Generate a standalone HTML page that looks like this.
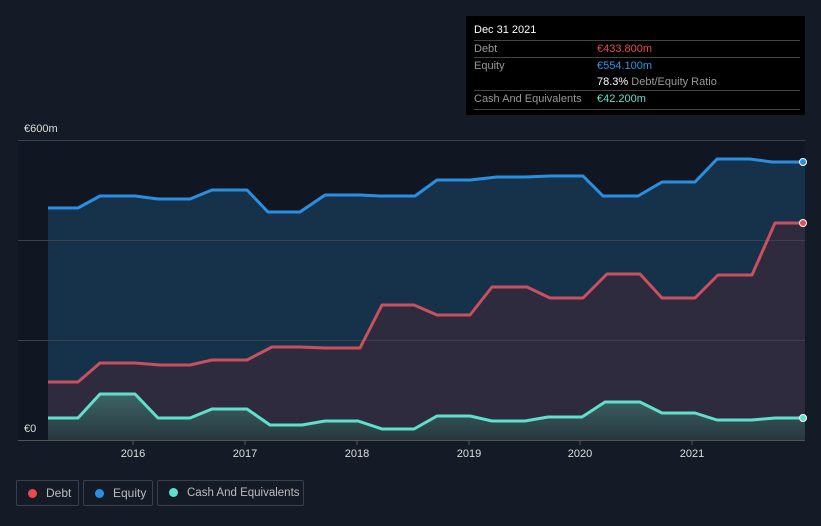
<!DOCTYPE html><html><head><style>
body{margin:0;width:821px;height:526px;background:#151b26;font-family:"Liberation Sans",sans-serif;overflow:hidden;position:relative}
.t{position:absolute;left:466px;top:16px;width:339px;height:99px;background:#000}
.r{position:absolute;left:8px;width:326px;border-top:1px solid #444;font-size:11px;color:#999}
.leg{position:absolute;top:480px;height:26px;border:1px solid #3a404c;border-radius:2px;font-size:12px;color:#bbb;line-height:24px;box-sizing:border-box;white-space:nowrap}
.leg i{display:inline-block;width:9px;height:9px;border-radius:50%;margin:0 9px 0 11px;vertical-align:-1px}
</style></head><body>
<svg width="821" height="526" style="position:absolute;left:0;top:0">
<defs><linearGradient id="cg" x1="0" y1="0" x2="0" y2="1"><stop offset="0" stop-color="#3f6466"/><stop offset="1" stop-color="#26383e"/></linearGradient></defs>
<rect x="18" y="140" width="787" height="300" fill="#111722"/>
<polygon fill="#16324a" points="48,208 78,208 100,196 135,196 158,199 190,199 212,190 247,190 268,212 300,212 325,195 360,195 380,196 415,196 437,180 470,180 497,177 525,177 550,176 583,176 603,196 638,196 662,182 695,182 717,159 750,159 772,162 805,162 805,440 48,440"/>
<polygon fill="#2f2b3e" points="48,382 78,382 100,363 135,363 160,365 190,365 212,360 247,360 272,347 300,347 325,348 360,348 382,305 414,305 437,315 470,315 492,287 527,287 550,298 583,298 607,274 640,274 662,298 695,298 718,275 752,275 775,223 805,223 805,440 48,440"/>
<polygon fill="url(#cg)" points="48,418 78,418 100,394 135,394 158,418 190,418 212,409 247,409 270,425 302,425 325,421 358,421 382,429 414,429 437,416 470,416 492,421 525,421 548,417 582,417 605,402 640,402 662,413 695,413 717,420 752,420 775,418 805,418 805,440 48,440"/>
<g stroke="#3a404c" stroke-width="1"><line x1="18" y1="140.5" x2="805" y2="140.5"/><line x1="18" y1="240.5" x2="805" y2="240.5"/><line x1="18" y1="340.5" x2="805" y2="340.5"/><line x1="18" y1="440.5" x2="805" y2="440.5" stroke="#555"/></g>
<g fill="none" stroke-width="3" stroke-linejoin="round">
<polyline stroke="#2a8fe0" points="48,208 78,208 100,196 135,196 158,199 190,199 212,190 247,190 268,212 300,212 325,195 360,195 380,196 415,196 437,180 470,180 497,177 525,177 550,176 583,176 603,196 638,196 662,182 695,182 717,159 750,159 772,162 805,162"/>
<polyline stroke="#c8505f" points="48,382 78,382 100,363 135,363 160,365 190,365 212,360 247,360 272,347 300,347 325,348 360,348 382,305 414,305 437,315 470,315 492,287 527,287 550,298 583,298 607,274 640,274 662,298 695,298 718,275 752,275 775,223 805,223"/>
<polyline stroke="#5fe0cc" points="48,418 78,418 100,394 135,394 158,418 190,418 212,409 247,409 270,425 302,425 325,421 358,421 382,429 414,429 437,416 470,416 492,421 525,421 548,417 582,417 605,402 640,402 662,413 695,413 717,420 752,420 775,418 805,418"/>
</g>
<circle cx="803" cy="162" r="3.5" fill="#2a8fe0" stroke="#fff" stroke-width="1"/>
<circle cx="803" cy="223" r="3.5" fill="#e0505a" stroke="#fff" stroke-width="1"/>
<circle cx="803" cy="418" r="3.5" fill="#5fe0cc" stroke="#fff" stroke-width="1"/>
<g stroke="#555"><line x1="133" y1="441" x2="133" y2="445"/><line x1="245" y1="441" x2="245" y2="445"/><line x1="357" y1="441" x2="357" y2="445"/><line x1="469" y1="441" x2="469" y2="445"/><line x1="580" y1="441" x2="580" y2="445"/><line x1="692" y1="441" x2="692" y2="445"/></g>
<g fill="#ddd" font-size="11" text-anchor="middle" font-family="Liberation Sans"><text x="133" y="457">2016</text><text x="245" y="457">2017</text><text x="357" y="457">2018</text><text x="469" y="457">2019</text><text x="580" y="457">2020</text><text x="692" y="457">2021</text></g>
<text x="24" y="132" fill="#ddd" font-size="11" font-family="Liberation Sans">€600m</text>
<text x="24" y="432" fill="#ddd" font-size="11" font-family="Liberation Sans">€0</text>
</svg>
<div class="t">
<div style="position:absolute;left:8px;top:8px;color:#fff;font-size:11px">Dec 31 2021</div>
<div class="r" style="top:24px;height:16px;line-height:16px">Debt<span style="position:absolute;left:123px;color:#e84a4f">€433.800m</span></div>
<div class="r" style="top:41px;height:33px;line-height:16px">Equity<span style="position:absolute;left:123px;color:#2a9ae8">€554.100m</span><br><span style="position:absolute;left:123px;top:16px"><b style="color:#fff;font-weight:normal">78.3%</b> Debt/Equity Ratio</span></div>
<div class="r" style="top:74px;height:18px;line-height:16px;border-bottom:1px solid #444">Cash And Equivalents<span style="position:absolute;left:123px;color:#5fe0cc">€42.200m</span></div>
</div>
<div class="leg" style="left:16px;width:63px"><i style="background:#e84a4f"></i>Debt</div>
<div class="leg" style="left:83px;width:70px"><i style="background:#2a8fe0"></i>Equity</div>
<div class="leg" style="left:157px;width:147px;font-size:11.5px"><i style="background:#5fe0cc"></i>Cash And Equivalents</div>
</body></html>
